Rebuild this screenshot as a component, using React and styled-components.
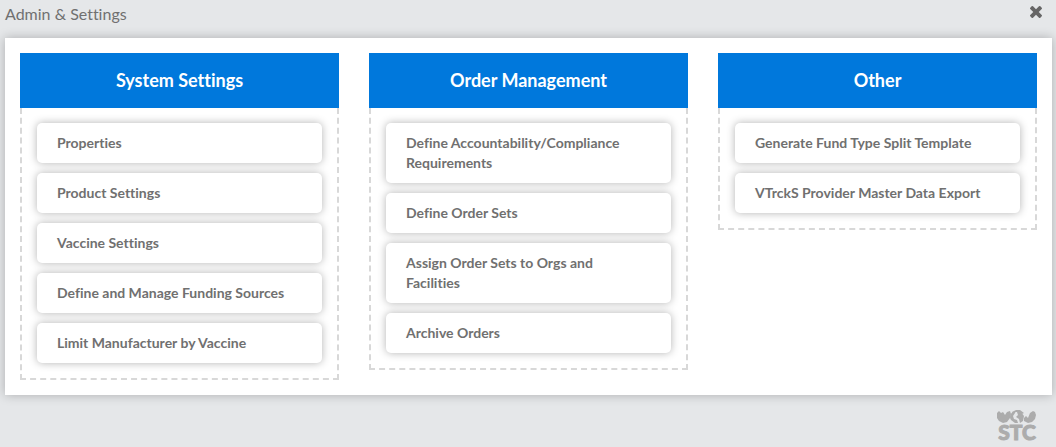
import React from "react"
import styled, { createGlobalStyle } from "styled-components"

const GlobalStyle = createGlobalStyle`
  * {
    box-sizing: border-box;
  }

  body {
    margin: 0;
    background: #e5e7e9;
    color: #707070;
    font-family: Lato, "Open Sans", sans-serif;
    font-size: 14px;
    font-variant-ligatures: none;
    line-height: 20px;
  }
`

const Page = styled.div`
  padding: 0 4px 0 5px;
`

const TopBar = styled.header`
  display: flex;
  justify-content: space-between;
  height: 38px;
  padding: 4px 8px 0 0;
`

const PageTitle = styled.h1`
  margin: 0;
  font-size: 16px;
  font-weight: 400;
  line-height: 20px;
`

const CloseButton = styled.button`
  display: flex;
  align-items: center;
  justify-content: center;
  width: 16px;
  height: 16px;
  padding: 0;
  border: none;
  background: none;
  cursor: pointer;
`

const CloseIcon = styled.svg`
  width: 12px;
  height: 12px;
  fill: #666;
`

const Panel = styled.main`
  display: grid;
  grid-template-columns: repeat(3, 1fr);
  align-items: start;
  gap: 30px;
  padding: 15px;
  background: #fff;
  box-shadow: 0 0 10px rgba(0, 0, 0, 0.25);

  @media (max-width: 720px) {
    grid-template-columns: 1fr;
  }
`

const ColumnTitle = styled.h2`
  margin: 0;
  padding: 15px;
  background: #0078dc;
  color: #fff;
  font-size: 18px;
  font-weight: 700;
  line-height: 25px;
  text-align: center;
`

const LinkList = styled.ul`
  display: flex;
  flex-direction: column;
  gap: 10px;
  margin: 0;
  padding: 15px;
  border: 2px dashed #d8d8d8;
  border-top: none;
  list-style: none;
`

const LinkCard = styled.a`
  display: block;
  padding: 10px 30px 10px 20px;
  border-radius: 5px;
  background: #fff;
  box-shadow: 0 0 8px rgba(0, 0, 0, 0.3);
  color: #707070;
  font-weight: 700;
  text-decoration: none;

  &:hover {
    color: #0078dc;
  }
`

const Footer = styled.footer`
  display: flex;
  justify-content: flex-end;
  padding: 15px 14px 0;
`

const Logo = styled.svg`
  display: block;
  width: 42px;
  height: 36px;
  fill: #acacac;
`

const LogoText = styled.text`
  font-family: Lato, sans-serif;
  font-size: 21px;
  font-weight: 900;
  stroke: #acacac;
  stroke-width: 1px;
`

const columns = [
  {
    title: "System Settings",
    links: [
      "Properties",
      "Product Settings",
      "Vaccine Settings",
      "Define and Manage Funding Sources",
      "Limit Manufacturer by Vaccine",
    ],
  },
  {
    title: "Order Management",
    links: [
      "Define Accountability/Compliance Requirements",
      "Define Order Sets",
      "Assign Order Sets to Orgs and Facilities",
      "Archive Orders",
    ],
  },
  {
    title: "Other",
    links: ["Generate Fund Type Split Template", "VTrckS Provider Master Data Export"],
  },
]

const StcLogo = () => (
  <Logo viewBox="0 0 42 36" role="img" aria-label="STC">
    <path d="M1 3L3 1L5 3L7 2L9 5L11 2L14 1L15 4L14 8L11 12L7 13L3 11L1 8Z" />
    <path d="M20 1A7 6 0 0 0 15 10L19 13L22 13L21 10L18 9L17 6L19 3ZM21 2L25 2L28 6L27 11L24 13L23 9L20 7L22 5Z" />
    <path d="M28 8L30 6L32 8L34 3L37 1L39 2L40 5L39 9L36 12L32 13L28 11Z" />
    <path d="M16 2L20 0L24 0L28 3L26 4L22 2L19 2L17 4Z" />
    <LogoText x="21" y="30" textAnchor="middle">
      STC
    </LogoText>
  </Logo>
)

const App = () => {
  return (
    <>
      <GlobalStyle />
      <Page>
        <TopBar>
          <PageTitle>Admin &amp; Settings</PageTitle>
          <CloseButton type="button" aria-label="Close">
            <CloseIcon viewBox="110 366 1188 1188">
              <path d="M1298 1322q0 40-28 68l-136 136q-28 28-68 28t-68-28l-294-294-294 294q-28 28-68 28t-68-28l-136-136q-28-28-28-68t28-68l294-294-294-294q-28-28-28-68t28-68l136-136q28-28 68-28t68 28l294 294 294-294q28-28 68-28t68 28l136 136q28 28 28 68t-28 68l-294 294 294 294q28 28 28 68z" />
            </CloseIcon>
          </CloseButton>
        </TopBar>
        <Panel>
          {columns.map((column) => (
            <section key={column.title}>
              <ColumnTitle>{column.title}</ColumnTitle>
              <LinkList>
                {column.links.map((link) => (
                  <li key={link}>
                    <LinkCard href="#">{link}</LinkCard>
                  </li>
                ))}
              </LinkList>
            </section>
          ))}
        </Panel>
        <Footer>
          <StcLogo />
        </Footer>
      </Page>
    </>
  )
}

export default App
